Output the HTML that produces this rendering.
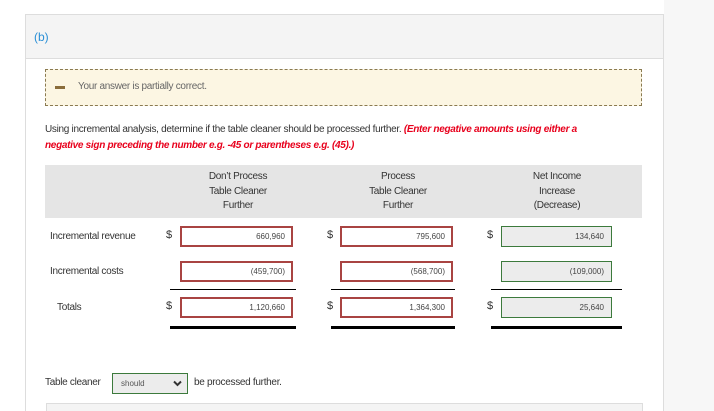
<!DOCTYPE html>
<html><head><style>
html,body{margin:0;width:714px;height:411px;overflow:hidden}
body{background:#fff;font-family:"Liberation Sans",sans-serif;position:relative;color:#333}
.a{position:absolute}
.in{position:absolute;border:2px solid #a94442;box-sizing:border-box;height:21px;font-size:8px;text-align:right;padding-right:6px;line-height:17px;color:#444;background:#fff}
.g{border:1px solid #3c7a3c;background:#ececec;line-height:19px;padding-right:7px}
.d{position:absolute;font-size:11px}
.lb{position:absolute;height:3px;background:#000}
.lab{position:absolute;font-size:10px;letter-spacing:-0.3px}
.h{position:absolute;font-size:10px;text-align:center;line-height:14.5px;width:130px;letter-spacing:-0.3px}
</style></head><body>
<div class="a" style="left:664px;top:0;width:50px;height:411px;background:#f7f7f7"></div>
<div class="a" style="left:25px;top:14px;width:639px;height:397px;border:1px solid #ddd;border-bottom:none;box-sizing:border-box"></div>
<div class="a" style="left:26px;top:15px;width:637px;height:43px;background:#f4f4f4;border-bottom:1px solid #ddd"></div>
<div class="a" style="left:34px;top:30px;font-size:12px;color:#2a8fd6">(b)</div>
<div class="a" style="left:45px;top:69px;width:597px;height:37px;background:#fcf6e3;border:1px dashed #8a7a50;box-sizing:border-box"></div>
<div class="a" style="left:55px;top:86px;width:10px;height:3px;background:#8a6d3b"></div>
<div class="a" style="left:78px;top:81px;font-size:10px;color:#666;letter-spacing:-0.3px">Your answer is partially correct.</div>
<div class="a" style="left:45px;top:122px;width:572px;font-size:10px;line-height:16px;letter-spacing:-0.3px;color:#333">Using incremental analysis, determine if the table cleaner should be processed further. <i style="color:#e8001c;font-weight:bold">(Enter negative amounts using either a negative sign preceding the number e.g. -45 or parentheses e.g. (45).)</i></div>
<div class="a" style="left:45px;top:165px;width:597px;height:53px;background:#e5e5e5"></div>
<div class="h" style="left:173px;top:170px">Don’t Process<br>Table Cleaner<br>Further</div>
<div class="h" style="left:333px;top:170px">Process<br>Table Cleaner<br>Further</div>
<div class="h" style="left:492px;top:170px">Net Income<br>Increase<br>(Decrease)</div>
<div class="lab" style="left:50px;top:231px">Incremental revenue</div>
<div class="lab" style="left:50px;top:266px">Incremental costs</div>
<div class="lab" style="left:57px;top:302px">Totals</div>
<div class="d" style="left:166px;top:229px">$</div><div class="d" style="left:327px;top:229px">$</div><div class="d" style="left:487px;top:229px">$</div>
<div class="d" style="left:166px;top:300px">$</div><div class="d" style="left:327px;top:300px">$</div><div class="d" style="left:487px;top:300px">$</div>
<div class="in" style="left:180px;top:226px;width:113px">660,960</div>
<div class="in" style="left:340px;top:226px;width:113px">795,600</div>
<div class="in g" style="left:501px;top:226px;width:111px">134,640</div>
<div class="in" style="left:180px;top:261px;width:113px">(459,700)</div>
<div class="in" style="left:340px;top:261px;width:113px">(568,700)</div>
<div class="in g" style="left:501px;top:261px;width:111px">(109,000)</div>
<div class="in" style="left:180px;top:297px;width:113px">1,120,660</div>
<div class="in" style="left:340px;top:297px;width:113px">1,364,300</div>
<div class="in g" style="left:501px;top:297px;width:111px">25,640</div>
<div class="a" style="left:170px;top:289px;width:126px;height:1px;background:#000"></div>
<div class="a" style="left:331px;top:289px;width:124px;height:1px;background:#000"></div>
<div class="a" style="left:491px;top:289px;width:131px;height:1px;background:#000"></div>
<div class="lb" style="left:170px;top:326px;width:126px"></div>
<div class="lb" style="left:331px;top:326px;width:124px"></div>
<div class="lb" style="left:491px;top:326px;width:131px"></div>
<div class="a" style="left:45px;top:377px;font-size:10px;letter-spacing:-0.3px">Table cleaner</div>
<div class="a" style="left:112px;top:373px;width:76px;height:21px;border:1px solid #3c7a3c;background:#ececec;box-sizing:border-box;font-size:8px;color:#555;padding:5px 0 0 8px">should
<svg class="a" style="left:60px;top:6px" width="9" height="7" viewBox="0 0 9 7"><path d="M1 1.5 L4.5 5 L8 1.5" stroke="#333" stroke-width="2" fill="none"/></svg></div>
<div class="a" style="left:194px;top:377px;font-size:10px;letter-spacing:-0.3px">be processed further.</div>
<div class="a" style="left:46px;top:403px;width:597px;height:10px;background:#f4f4f4;border:1px solid #ddd;box-sizing:border-box"></div>
</body></html>
